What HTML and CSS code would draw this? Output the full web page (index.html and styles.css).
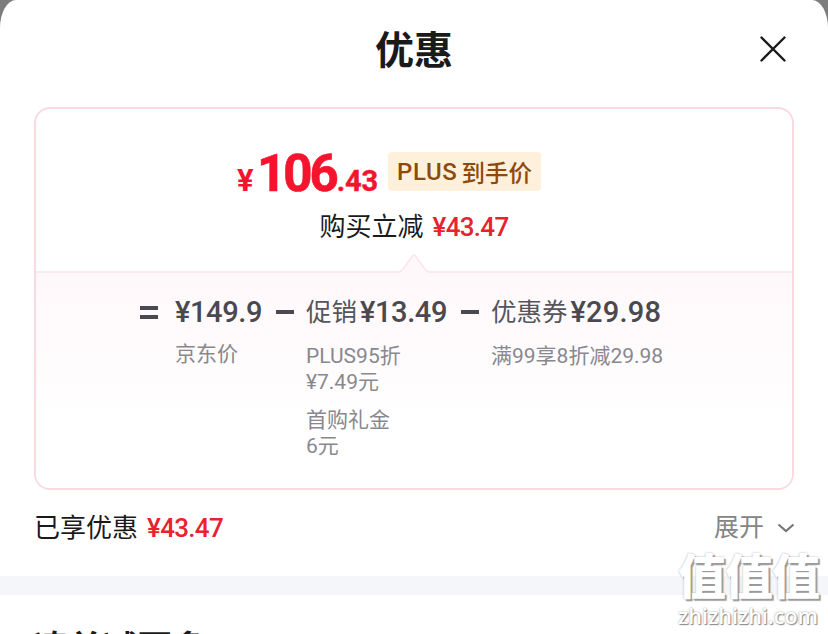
FILE: index.html
```html
<!DOCTYPE html>
<html lang="zh-CN">
<head>
    <meta charset="UTF-8">
    <meta name="viewport" content="width=device-width, initial-scale=1.0">
    <title>优惠</title>
    <link rel="stylesheet" href="styles.css">
</head>
<body>
    <div class="sheet">
        <header>
            <h1>优惠</h1>
            <svg class="close" viewBox="0 0 26 26">
                <path d="M1.5 1.5L24.5 24.5M24.5 1.5L1.5 24.5"/>
            </svg>
        </header>

        <div class="card">
            <div class="summary">
                <div class="price-row">
                    <div class="price"><span class="yen">¥</span><span class="big">106</span><span class="cents">.43</span></div>
                    <div class="plus-tag"><span class="plus">PLUS</span>到手价</div>
                </div>
                <div class="saved">购买立减<span class="red">¥43.47</span></div>
            </div>

            <div class="detail">
                <svg class="arrow" viewBox="0 0 30 20">
                    <path class="arrow-fill" d="M0 20C3 19 4 17 6 14L13 3Q15 0 17 3L24 14C26 17 27 19 30 20Z"/>
                    <path class="arrow-line" d="M0 18.5C3 18 4 16 6 13.5L13.5 3Q15 1 16.5 3L24 13.5C26 16 27 18 30 18.5"/>
                </svg>
                <span class="sign equals"></span>
                <div class="item origin">
                    <div class="amount"><b>¥149.9</b></div>
                    <p>京东价</p>
                </div>
                <span class="sign"></span>
                <div class="item promo">
                    <div class="amount">促销<b>¥13.49</b></div>
                    <p>PLUS95折<br>¥7.49元</p>
                    <p>首购礼金<br>6元</p>
                </div>
                <span class="sign"></span>
                <div class="item coupon">
                    <div class="amount">优惠券<b>¥29.98</b></div>
                    <p>满99享8折减29.98</p>
                </div>
            </div>
        </div>

        <div class="total">
            <div>已享优惠<span class="red">¥43.47</span></div>
            <div class="expand">展开
                <svg viewBox="0 0 18 10"><path d="M1.5 1.5L9 8L16.5 1.5"/></svg>
            </div>
        </div>

        <div class="divider"></div>
        <h2>凑单减更多</h2>
    </div>

    <div class="watermark">
        <div class="mark">值值值</div>
        <div class="site">zhizhizhi.com</div>
    </div>
</body>
</html>
```

FILE: styles.css
```css
* {
    box-sizing: border-box;
}

body {
    margin: 0;
    height: 634px;
    overflow: hidden;
    position: relative;
    background: #7d7d7d;
    color: #1a1a1a;
    font-family: Roboto, "Noto Sans CJK SC", sans-serif;
}

.sheet {
    height: 634px;
    overflow: hidden;
    background: #fff;
    border-radius: 16px 16px 0 0 / 28px 28px 0 0;
}

header {
    height: 107px;
    padding: 0 42px;
    display: grid;
    grid-template-columns: 1fr auto 1fr;
    align-items: start;
}

h1 {
    grid-column: 2;
    margin: 22px 0 0;
    font-size: 39px;
    font-weight: 700;
    line-height: 58px;
}

.close {
    justify-self: end;
    width: 26px;
    height: 26px;
    margin-top: 36px;
    fill: none;
    stroke: #1a1a1a;
    stroke-width: 2.4;
    stroke-linecap: round;
}

.card {
    height: 383px;
    margin: 0 34px;
    border: 2px solid #f8dbe1;
    border-radius: 16px;
    overflow: hidden;
}

.summary {
    height: 162px;
    padding-top: 43px;
}

.price-row {
    display: flex;
    height: 40px;
    padding-left: 201px;
}

.price {
    display: flex;
    align-items: baseline;
    width: 151px;
    color: #f5142d;
    font-weight: 700;
    line-height: 43px;
}

.yen {
    width: 20px;
    font-size: 31px;
}

.big {
    font-size: 51px;
    letter-spacing: -3px;
    -webkit-text-stroke: 0.7px #f5142d;
}

.cents {
    margin-left: 1px;
    font-size: 29px;
    letter-spacing: -0.2px;
    -webkit-text-stroke: 0.4px #f5142d;
}

.plus-tag {
    display: flex;
    justify-content: center;
    align-items: center;
    width: 153px;
    height: 39px;
    border-radius: 4px;
    background: #fff0db;
    color: #8d4b0a;
    font-size: 23.5px;
    font-weight: 500;
}

.plus {
    margin-right: 4px;
    font-size: 24px;
    letter-spacing: 0.6px;
}

.saved {
    display: flex;
    justify-content: center;
    margin-top: 17px;
    font-size: 26px;
    line-height: 37px;
}

.red {
    margin-left: 9px;
    color: #e8222f;
    font-size: 26px;
    font-weight: 500;
    letter-spacing: -0.7px;
}

.detail {
    position: relative;
    display: flex;
    height: 217px;
    padding: 21px 0 0 104px;
    border-top: 2px solid #fde9ed;
    background: linear-gradient(#fef8fa, #fffcfd 100px, #fff 150px);
}

.arrow {
    position: absolute;
    top: -20px;
    left: 363px;
    width: 30px;
    height: 20px;
}

.arrow-fill {
    fill: #fef8fa;
}

.arrow-line {
    fill: none;
    stroke: #fde6eb;
    stroke-width: 1.6;
}

.sign {
    width: 18px;
    height: 4px;
    margin-top: 16px;
    background: #49494f;
}

.equals {
    height: 13px;
    margin-top: 12px;
    border-top: 4px solid #49494f;
    border-bottom: 4px solid #49494f;
    background: none;
}

.item {
    color: #88888f;
    font-size: 21px;
}

.origin {
    width: 101px;
    margin-left: 17px;
}

.promo {
    width: 155px;
    margin-left: 12px;
}

.coupon {
    margin-left: 12px;
}

.amount {
    display: flex;
    height: 36px;
    color: #55555b;
    font-size: 25.5px;
    line-height: 36px;
    white-space: nowrap;
}

.amount b {
    margin-left: 3px;
    color: #49494f;
    font-size: 29px;
    font-weight: 500;
    letter-spacing: -0.4px;
}

.origin b {
    margin-left: 0;
}

.coupon b {
    letter-spacing: 0.2px;
}

.item p {
    margin: 13px 0 12px;
    line-height: 26px;
    white-space: nowrap;
}

.item p + p {
    margin-top: 12px;
}

.origin p {
    margin-top: 11px;
}

.total {
    display: flex;
    justify-content: space-between;
    height: 86px;
    padding: 20px 33px 0 34px;
    font-size: 26px;
    line-height: 36px;
}

.total > div {
    display: flex;
    height: 36px;
}

.total .expand {
    align-items: center;
    gap: 13px;
    color: #858585;
    font-size: 25px;
}

.expand svg {
    width: 18px;
    height: 10px;
    fill: none;
    stroke: #777;
    stroke-width: 2.2;
}

.divider {
    height: 19px;
    background: #f5f6fa;
}

h2 {
    margin: 28px 0 0 34px;
    font-size: 34.5px;
    font-weight: 700;
    line-height: 50px;
}

.watermark {
    position: absolute;
    left: 678px;
    top: 550px;
    color: #fff;
    white-space: nowrap;
    text-shadow: 2px 2px 1px #999, 0 0 2px #aaa;
}

.mark {
    font-size: 48px;
    font-weight: 900;
    line-height: 56px;
    letter-spacing: -1px;
}

.site {
    font-family: "Open Sans", sans-serif;
    font-size: 21.5px;
    font-weight: 600;
    line-height: 20px;
    text-shadow: 1px 1px 1px #888, 0 0 2px #999;
}
```
